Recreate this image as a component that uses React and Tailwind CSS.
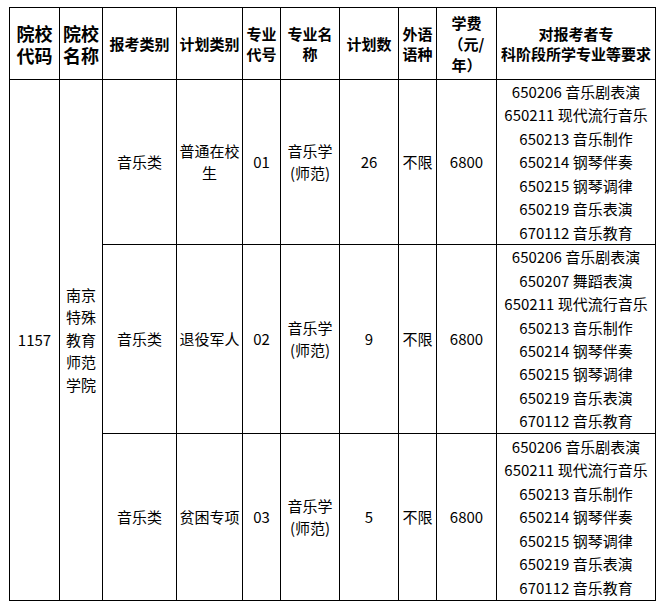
import React from 'react';

const majorsA = [
  '650206 音乐剧表演',
  '650211 现代流行音乐',
  '650213 音乐制作',
  '650214 钢琴伴奏',
  '650215 钢琴调律',
  '650219 音乐表演',
  '670112 音乐教育',
];

const majorsB = [
  '650206 音乐剧表演',
  '650207 舞蹈表演',
  '650211 现代流行音乐',
  '650213 音乐制作',
  '650214 钢琴伴奏',
  '650215 钢琴调律',
  '650219 音乐表演',
  '670112 音乐教育',
];

const rows = [
  { h: 'h-[165px]', plan: <>普通在校<br />生</>, code: '01', count: '26', majors: majorsA },
  { h: 'h-[189px]', plan: '退役军人', code: '02', count: '9', majors: majorsB },
  { h: 'h-[167px]', plan: '贫困专项', code: '03', count: '5', majors: majorsA },
];

const td = 'border border-black text-center align-middle p-0';

export default function App() {
  return (
    <div className="bg-white w-[669px] h-[610px] pt-[7px] pl-[9px] text-black text-[15px] leading-[22px] font-['Noto_Sans_CJK_SC','Noto_Sans',sans-serif]">
      <table className="table-fixed border-collapse w-[646px]">
        <colgroup>
          <col className="w-[50px]" />
          <col className="w-[43px]" />
          <col className="w-[74px]" />
          <col className="w-[66px]" />
          <col className="w-[38px]" />
          <col className="w-[59px]" />
          <col className="w-[59px]" />
          <col className="w-[38px]" />
          <col className="w-[60px]" />
          <col className="w-[159px]" />
        </colgroup>
        <thead>
          <tr className="h-[72px] font-bold leading-[20px]">
            <th className={`${td} text-[18px] leading-[22px]`}>院校<br />代码</th>
            <th className={`${td} text-[18px] leading-[22px]`}>院校<br />名称</th>
            <th className={td}>报考类别</th>
            <th className={td}>计划类别</th>
            <th className={td}>专业<br />代号</th>
            <th className={td}>专业名<br />称</th>
            <th className={td}>计划数</th>
            <th className={td}>外语<br />语种</th>
            <th className={`${td} leading-[21px]`}>学费<br />（元/<br />年）</th>
            <th className={td}>对报考者专<br />科阶段所学专业等要求</th>
          </tr>
        </thead>
        <tbody>
          {rows.map((r, i) => (
            <tr key={i} className={r.h}>
              {i === 0 && (
                <>
                  <td rowSpan={3} className={td}>1157</td>
                  <td rowSpan={3} className={`${td} leading-[22.5px]`}>南京<br />特殊<br />教育<br />师范<br />学院</td>
                </>
              )}
              <td className={td}>音乐类</td>
              <td className={td}>{r.plan}</td>
              <td className={td}>{r.code}</td>
              <td className={td}>音乐学<br />(师范)</td>
              <td className={td}>{r.count}</td>
              <td className={td}>不限</td>
              <td className={td}>6800</td>
              <td className={`${td} leading-[23.4px] whitespace-nowrap`}>
                {r.majors.map((m) => (
                  <div key={m}>{m}</div>
                ))}
              </td>
            </tr>
          ))}
        </tbody>
      </table>
    </div>
  );
}
